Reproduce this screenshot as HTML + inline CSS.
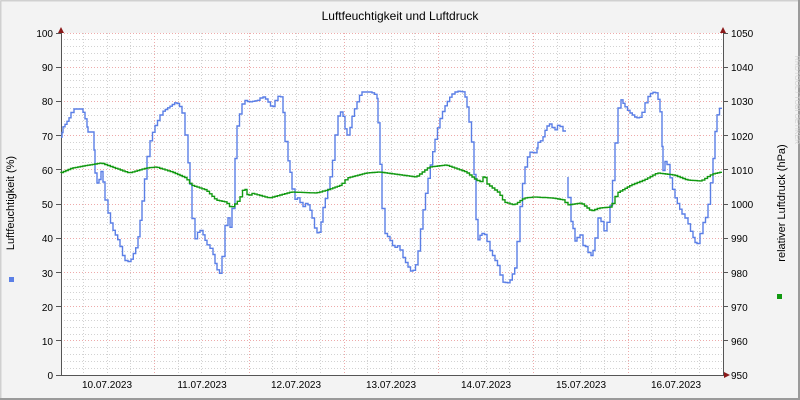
<!DOCTYPE html>
<html><head><meta charset="utf-8"><style>
html,body{margin:0;padding:0;background:#f3f3f3;}
svg{display:block;font-family:"Liberation Sans","DejaVu Sans",sans-serif;}
</style></head><body>
<svg width="800" height="400" viewBox="0 0 800 400" xmlns="http://www.w3.org/2000/svg">
<rect x="0" y="0" width="800" height="400" fill="#f3f3f3"/>
<path d="M0.5 0.5H799.5M0.5 0.5V399.5" stroke="#d0d0d0" stroke-width="2" fill="none"/>
<path d="M799 0V400M0 399H800" stroke="#9a9a9a" stroke-width="2" fill="none"/>
<rect x="61" y="33" width="662" height="342" fill="#fff"/>
<g stroke="#d2d2d2" stroke-width="1" stroke-dasharray="1,2" fill="none">
<path d="M61 368.5H723M61 361.5H723M61 354.5H723M61 347.5H723M61 334.5H723M61 327.5H723M61 320.5H723M61 313.5H723M61 299.5H723M61 292.5H723M61 286.5H723M61 279.5H723M61 265.5H723M61 258.5H723M61 251.5H723M61 245.5H723M61 231.5H723M61 224.5H723M61 217.5H723M61 210.5H723M61 197.5H723M61 190.5H723M61 183.5H723M61 176.5H723M61 162.5H723M61 156.5H723M61 149.5H723M61 142.5H723M61 128.5H723M61 121.5H723M61 115.5H723M61 108.5H723M61 94.5H723M61 87.5H723M61 80.5H723M61 74.5H723M61 60.5H723M61 53.5H723M61 46.5H723M61 39.5H723"/>
<path d="M83.5 33V375M107.5 33V375M130.5 33V375M178.5 33V375M201.5 33V375M225.5 33V375M272.5 33V375M296.5 33V375M320.5 33V375M367.5 33V375M391.5 33V375M414.5 33V375M462.5 33V375M486.5 33V375M509.5 33V375M557.5 33V375M580.5 33V375M604.5 33V375M651.5 33V375M675.5 33V375M699.5 33V375"/>
</g>
<g stroke="#eeaaaa" stroke-width="1" stroke-dasharray="1,2" fill="none">
<path d="M61 340.5H723M61 306.5H723M61 272.5H723M61 238.5H723M61 204.5H723M61 169.5H723M61 135.5H723M61 101.5H723M61 67.5H723M61 33.5H723"/>
<path d="M154.5 33V375M249.5 33V375M344.5 33V375M438.5 33V375M533.5 33V375M628.5 33V375"/>
</g>
<g stroke="#555" stroke-width="1" fill="none">
<path d="M61.5 30V375.5H725"/>
<path d="M723.5 30V375.5"/>
<path d="M56 375.5H61M56 340.5H61M56 306.5H61M56 272.5H61M56 238.5H61M56 204.5H61M56 169.5H61M56 135.5H61M56 101.5H61M56 67.5H61M56 33.5H61"/>
<path d="M723 340.5H728M723 306.5H728M723 272.5H728M723 238.5H728M723 204.5H728M723 169.5H728M723 135.5H728M723 101.5H728M723 67.5H728M723 33.5H728"/>
</g>
<polygon points="58,33 64,33 61,27" fill="#8b1a1a"/>
<polygon points="720,33 726,33 723,27" fill="#8b1a1a"/>
<polygon points="724,372 724,378 730,375" fill="#8b1a1a"/>
<path id="b1" fill="none" stroke="#5b7fe6" stroke-width="1.4" data-p="61,137 62,137 63,128 67,123 71,116 74,109 83,109 87,122 88,132 94,132 95,168 99,188 101,171 103,172 105,192 108,208 113,228 120,242 125,260 131,262 138,245 142,212 147,168 150,145 155,128 160,118 163,112 170,107 177,102 182,108 185,118 188,152 192,195 195,242 200,229 203,232 207,243 213,250 217,268 222,275 225,238 228,213 232,232 235,185 237,132 242,108 245,100 250,102 260,100 263,96 268,100 273,108 275,105 278,96 283,97 285,128 288,155 292,178 295,200 300,197 303,208 308,202 312,213 317,233 321,232 323,212 330,185 335,152 338,118 343,110 347,135 350,135 352,120 357,105 362,92 372,92 377,95 378,102 382,185 385,232 390,238 395,248 400,245 403,255 408,265 413,273 418,262 423,218 428,185 435,145 440,122 445,108 452,95 458,91 465,92 469,112 474,152 478,242 482,233 487,235 490,248 495,258 500,268 503,282 510,283 517,265 520,218 525,172 530,152 537,153 538,143 543,140 547,127 552,123 555,132 560,123 563,130 566,132"/>
<path id="b2" fill="none" stroke="#5b7fe6" stroke-width="1.4" data-p="568,177 571,218 575,232 577,250 580,225 583,245 588,247 591,258 595,248 601,208 604,235 610,218 615,168 618,118 621,98 625,105 630,112 637,118 642,117 648,98 653,92 658,93 662,118 663,175 667,157 670,172 675,195 682,212 688,220 693,235 697,245 700,242 703,225 708,215 713,172 717,118 722,105"/>
<path id="g1" fill="none" stroke="#119911" stroke-width="1.4" data-p="61,173 73,168 90,165 102,163 113,167 130,173 147,168 157,167 173,172 187,178 192,185 207,190 217,200 227,202 232,208 240,200 245,187 249,197 252,193 270,198 292,192 317,193 328,190 342,185 348,178 367,173 380,172 417,177 430,167 447,165 467,172 477,180 483,182 485,172 487,183 500,193 505,202 515,205 525,198 535,197 553,198 565,200 568,205 582,203 592,211 600,208 612,207 618,193 632,185 645,180 658,173 675,175 688,180 702,181 713,174 722,172"/>
<g font-size="10" fill="#000">
<text x="400" y="20" font-size="12" text-anchor="middle">Luftfeuchtigkeit und Luftdruck</text>
<g text-anchor="end">
<text x="53" y="379">0</text><text x="53" y="345">10</text><text x="53" y="311">20</text><text x="53" y="277">30</text><text x="53" y="242">40</text><text x="53" y="208">50</text><text x="53" y="174">60</text><text x="53" y="140">70</text><text x="53" y="105">80</text><text x="53" y="71">90</text><text x="53" y="37">100</text>
</g>
<g>
<text x="731" y="379">950</text><text x="731" y="345">960</text><text x="731" y="311">970</text><text x="731" y="277">980</text><text x="731" y="242">990</text><text x="731" y="208">1000</text><text x="731" y="174">1010</text><text x="731" y="140">1020</text><text x="731" y="105">1030</text><text x="731" y="71">1040</text><text x="731" y="37">1050</text>
</g>
<g text-anchor="middle">
<text x="107" y="388">10.07.2023</text><text x="202" y="388">11.07.2023</text><text x="296" y="388">12.07.2023</text><text x="391" y="388">13.07.2023</text><text x="486" y="388">14.07.2023</text><text x="581" y="388">15.07.2023</text><text x="676" y="388">16.07.2023</text>
</g>
<text transform="translate(14,203) rotate(-90)" text-anchor="middle" font-size="11">Luftfeuchtigkeit (%)</text>
<text transform="translate(785,203) rotate(-90)" text-anchor="middle" font-size="11">relativer Luftdruck (hPa)</text>
<text transform="translate(795,100) rotate(90)" text-anchor="middle" font-size="7" fill="#cfcfcf">RRDTOOL / TOBI OETIKER</text>
</g>
<rect x="9" y="277" width="5" height="5" fill="#5b7fe6"/>
<rect x="777" y="294" width="5" height="5" fill="#119911"/>
</svg>
<script>
['b1','b2','g1'].forEach(function(id){
  var el=document.getElementById(id);
  var pts=el.getAttribute('data-p').trim().split(/\s+/).map(function(s){return s.split(',').map(Number);});
  var d='M'+pts[0][0]+' '+pts[0][1];
  for(var i=1;i<pts.length;i++){
    var a=pts[i-1],b=pts[i];
    var n=Math.max(1,Math.round(Math.abs(b[0]-a[0])/2.5));
    for(var k=1;k<=n;k++){
      var x=a[0]+(b[0]-a[0])*k/n, y=a[1]+(b[1]-a[1])*(k-0.5)/n;
      var x0=a[0]+(b[0]-a[0])*(k-1)/n;
      d+='L'+x0.toFixed(1)+' '+y.toFixed(1)+'L'+x.toFixed(1)+' '+y.toFixed(1);
    }
  }
  el.setAttribute('d',d);
});
</script>
</body></html>
